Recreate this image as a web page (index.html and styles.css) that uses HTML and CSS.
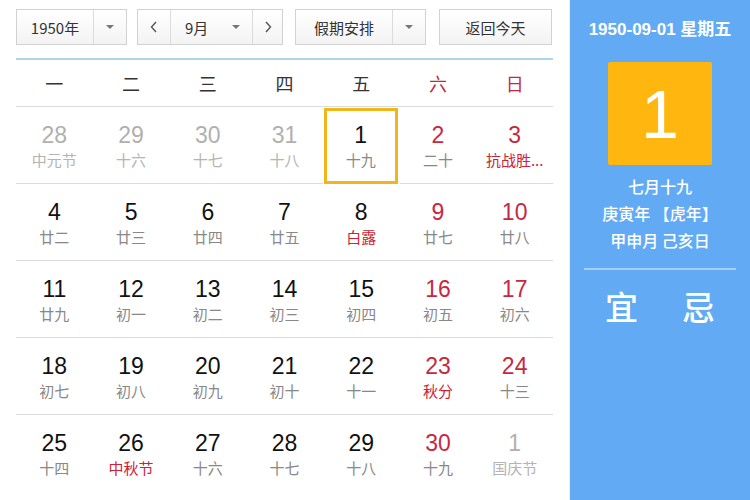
FILE: index.html
```html
<!DOCTYPE html>
<html>
<head>
<meta charset="utf-8">
<link rel="stylesheet" href="styles.css">
</head>
<body>
<div class="page">
  <div class="main">
    <div class="toolbar">
      <div class="box year">
        <span class="seg seg-year">1950年</span>
        <span class="seg seg-arrow"><i class="tri"></i></span>
      </div>
      <div class="box month">
        <span class="seg seg-nav">
          <svg width="10" height="14" viewBox="0 0 10 14"><path d="M7 2 L2.5 7 L7 12" fill="none" stroke="#555" stroke-width="1.4"/></svg>
        </span>
        <span class="seg seg-month"><span class="mtext">9月</span><i class="tri"></i></span>
        <span class="seg seg-nav last">
          <svg width="10" height="14" viewBox="0 0 10 14"><path d="M3 2 L7.5 7 L3 12" fill="none" stroke="#555" stroke-width="1.4"/></svg>
        </span>
      </div>
      <div class="box holiday">
        <span class="seg seg-holiday">假期安排</span>
        <span class="seg seg-arrow"><i class="tri"></i></span>
      </div>
      <div class="box today">返回今天</div>
    </div>
    <div class="calendar">
      <div class="week">
        <span>一</span><span>二</span><span>三</span><span>四</span><span>五</span><span class="red">六</span><span class="red">日</span>
      </div>
      <div class="grid">
        <div class="cell other"><b>28</b><em>中元节</em></div>
        <div class="cell other"><b>29</b><em>十六</em></div>
        <div class="cell other"><b>30</b><em>十七</em></div>
        <div class="cell other"><b>31</b><em>十八</em></div>
        <div class="cell selected"><b>1</b><em>十九</em></div>
        <div class="cell wk"><b>2</b><em>二十</em></div>
        <div class="cell wk"><b>3</b><em class="fest">抗战胜...</em></div>

        <div class="cell"><b>4</b><em>廿二</em></div>
        <div class="cell"><b>5</b><em>廿三</em></div>
        <div class="cell"><b>6</b><em>廿四</em></div>
        <div class="cell"><b>7</b><em>廿五</em></div>
        <div class="cell"><b>8</b><em class="fest">白露</em></div>
        <div class="cell wk"><b>9</b><em>廿七</em></div>
        <div class="cell wk"><b>10</b><em>廿八</em></div>

        <div class="cell"><b>11</b><em>廿九</em></div>
        <div class="cell"><b>12</b><em>初一</em></div>
        <div class="cell"><b>13</b><em>初二</em></div>
        <div class="cell"><b>14</b><em>初三</em></div>
        <div class="cell"><b>15</b><em>初四</em></div>
        <div class="cell wk"><b>16</b><em>初五</em></div>
        <div class="cell wk"><b>17</b><em>初六</em></div>

        <div class="cell"><b>18</b><em>初七</em></div>
        <div class="cell"><b>19</b><em>初八</em></div>
        <div class="cell"><b>20</b><em>初九</em></div>
        <div class="cell"><b>21</b><em>初十</em></div>
        <div class="cell"><b>22</b><em>十一</em></div>
        <div class="cell wk"><b>23</b><em class="fest">秋分</em></div>
        <div class="cell wk"><b>24</b><em>十三</em></div>

        <div class="cell lastrow"><b>25</b><em>十四</em></div>
        <div class="cell lastrow"><b>26</b><em class="fest">中秋节</em></div>
        <div class="cell lastrow"><b>27</b><em>十六</em></div>
        <div class="cell lastrow"><b>28</b><em>十七</em></div>
        <div class="cell lastrow"><b>29</b><em>十八</em></div>
        <div class="cell lastrow wk"><b>30</b><em>十九</em></div>
        <div class="cell lastrow other"><b>1</b><em>国庆节</em></div>
      </div>
    </div>
  </div>
  <div class="panel">
    <div class="pdate">1950-09-01 星期五</div>
    <div class="bigday">1</div>
    <div class="lunar">七月十九</div>
    <div class="lunar">庚寅年 【虎年】</div>
    <div class="lunar">甲申月 己亥日</div>
    <div class="sep"></div>
    <div class="yiji"><span>宜</span><span>忌</span></div>
  </div>
</div>
</body>
</html>
```

FILE: styles.css
```css
html, body {
  margin: 0;
  padding: 0;
  background: #fff;
}
body {
  font-family: "Liberation Sans", "Noto Sans CJK SC", sans-serif;
  color: #222;
}
.page {
  display: flex;
  width: 750px;
  height: 500px;
  overflow: hidden;
}
.main {
  width: 553px;
  padding: 9px 0 0 16px;
  border-right: 1px solid #e4f0fb;
  flex: none;
}
.toolbar {
  display: flex;
  height: 36px;
}
.box {
  display: flex;
  height: 34px;
  border: 1px solid #d2d2d2;
  background: linear-gradient(#ffffff, #f3f3f3);
  box-sizing: content-box;
  font-family: "Noto Sans CJK SC", sans-serif;
  font-size: 15px;
  color: #333;
}
.seg {
  display: flex;
  align-items: center;
  justify-content: center;
  border-right: 1px solid #dcdcdc;
}
.seg:last-child { border-right: none; }
.year { width: 109px; }
.seg-year { width: 76px; }
.seg-arrow { flex: 1; }
.tri {
  display: block;
  width: 0;
  height: 0;
  border-left: 4px solid transparent;
  border-right: 4px solid transparent;
  border-top: 4px solid #777;
}
.month { width: 144px; margin-left: 10px; }
.seg-nav { width: 32px; }
.seg-month { width: 81px; justify-content: flex-start; }
.mtext { margin-left: 14px; margin-right: 24px; }
.seg-nav.last { flex: 1; }
.holiday { width: 129px; margin-left: 12px; }
.seg-holiday { width: 96px; }
.today {
  width: 111px;
  margin-left: 13px;
  align-items: center;
  justify-content: center;
}
.calendar {
  width: 537px;
  margin-top: 13px;
  border-top: 2px solid #a9d6f3;
}
.week {
  display: grid;
  grid-template-columns: repeat(7, 1fr);
  height: 46px;
  border-bottom: 1px solid #dcdcdc;
  font-family: "Noto Sans CJK SC", sans-serif;
  font-size: 18px;
  color: #333;
}
.week span {
  display: flex;
  align-items: center;
  justify-content: center;
}
.week .red { color: #c4283d; }
.grid {
  display: grid;
  grid-template-columns: repeat(7, 1fr);
  grid-auto-rows: 77px;
}
.cell {
  display: flex;
  flex-direction: column;
  align-items: center;
  border-bottom: 1px solid #dcdcdc;
  box-sizing: border-box;
  padding-top: 15px;
}
.cell.lastrow { border-bottom: none; }
.cell b {
  font-family: "Liberation Sans", sans-serif;
  font-weight: normal;
  font-size: 23px;
  line-height: 26px;
  color: #111;
}
.cell em {
  font-style: normal;
  font-family: "Noto Sans CJK SC", sans-serif;
  font-size: 15px;
  line-height: 20px;
  margin-top: 2px;
  color: #888;
}
.cell.wk b { color: #c8283f; }
.cell em.fest { color: #cc2236; }
.cell.other b { color: #b0b0b0; }
.cell.other em { color: #b4b4b4; }
.cell.selected {
  border: 3px solid #f2b61b;
  margin: 1px 2px 0 1px;
  padding-top: 11px;
}
.panel {
  flex: 1;
  background: #62abf4;
  color: #fff;
  display: flex;
  flex-direction: column;
  align-items: center;
  font-family: "Noto Sans CJK SC", sans-serif;
}
.pdate {
  margin-top: 18px;
  font-family: "Liberation Sans", "Noto Sans CJK SC", sans-serif;
  font-size: 17px;
  font-weight: bold;
  line-height: 24px;
}
.bigday {
  margin-top: 20px;
  width: 104px;
  height: 103px;
  background: #ffb70f;
  border-radius: 2px;
  display: flex;
  align-items: center;
  justify-content: center;
  font-family: "Liberation Sans", sans-serif;
  font-size: 68px;
  line-height: 1;
}
.lunar {
  font-size: 16px;
  font-weight: 500;
  line-height: 27px;
}
.bigday + .lunar { margin-top: 8px; }
.sep {
  width: 152px;
  height: 2px;
  background: #a6cff8;
  margin-top: 14px;
}
.yiji {
  display: flex;
  gap: 44px;
  margin-top: 14px;
  font-size: 33px;
  line-height: 44px;
  font-weight: 500;
}
```
